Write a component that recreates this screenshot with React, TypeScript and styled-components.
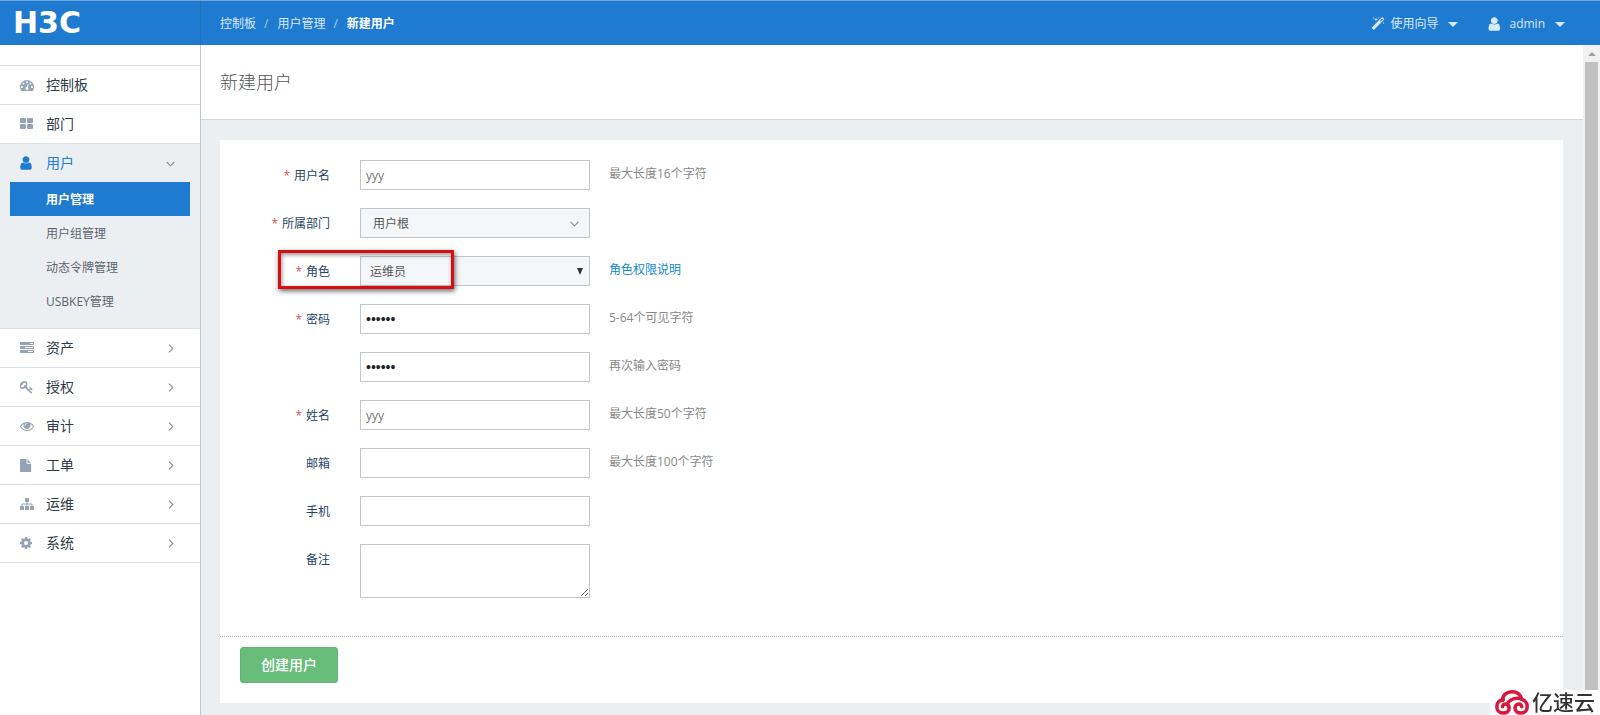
import React from "react";
import styled, { createGlobalStyle } from "styled-components";

const blue = "#1f7bd0";
const line = "#dde1e5";

const GlobalStyle = createGlobalStyle`
  * { box-sizing: border-box; }
  body {
    margin: 0;
    background: #fff;
    color: #333;
    font-family: "Open Sans", "Noto Sans CJK SC", sans-serif;
    font-size: 12px;
    line-height: 18px;
  }
  input, select, textarea, button { font: inherit; margin: 0; }
  a { color: inherit; text-decoration: none; }
  ul, ol { list-style: none; margin: 0; padding: 0; }
`;

const Shell = styled.div`
  display: flex;
  flex-direction: column;
  height: 100vh;
  overflow: hidden;
`;

const TopBar = styled.header`
  display: flex;
  align-items: center;
  flex: none;
  height: 45px;
  border-top: 1px solid #6fa8dc;
  background: ${blue};
  color: #d8e9fa;
  line-height: 20px;
`;

const Brand = styled.a`
  display: flex;
  align-items: center;
  align-self: stretch;
  width: 201px;
  padding-left: 13px;
  border-right: 1px solid #2470b8;
  color: #fff;
  font: bold 30px/44px "DejaVu Sans", sans-serif;
`;

const Crumbs = styled.ol`
  display: flex;
  flex: 1;
  padding: 2px 0 0 19px;
  li + li::before {
    content: "/";
    padding: 0 9px 0 8px;
    color: #a5cbef;
  }
`;

const CrumbLink = styled.a<{ $current?: boolean }>`
  color: ${(p) => (p.$current ? "#fff" : "#d8e9fa")};
  font-weight: ${(p) => (p.$current ? 700 : 400)};
`;

const TopActions = styled.div`
  display: flex;
  gap: 30px;
  padding: 2px 35px 0 0;
`;

const TopButton = styled.button`
  display: flex;
  align-items: center;
  gap: 5px;
  padding: 0;
  border: 0;
  background: none;
  color: #d8e9fa;
  cursor: pointer;
`;

const Caret = styled.span`
  margin-left: 5px;
  border: 5px solid transparent;
  border-top-color: #d8e9fa;
  border-bottom: 0;
`;

const Body = styled.div`
  display: flex;
  flex: 1;
  min-height: 0;
`;

const Sidebar = styled.nav`
  flex: none;
  width: 201px;
  padding-top: 20px;
  border-right: 1px solid #c3c7cb;
  background: #fff;
`;

const Menu = styled.ul`
  border-bottom: 1px solid ${line};
`;

const MenuGroup = styled.li<{ $open?: boolean }>`
  border-top: 1px solid ${line};
  padding-bottom: ${(p) => (p.$open ? 10 : 0)}px;
  background: ${(p) => (p.$open ? "#eceff2" : "#fff")};
`;

const MenuLink = styled.a<{ $open?: boolean }>`
  display: flex;
  align-items: center;
  height: 38px;
  padding: 0 25px 0 20px;
  color: ${(p) => (p.$open ? blue : "#2f3b48")};
  font-size: 14px;
  svg:first-child { color: ${(p) => (p.$open ? blue : "#93a3b3")}; }
`;

const MenuIcon = styled.span`
  display: flex;
  width: 26px;
`;

const MenuText = styled.span`
  flex: 1;
`;

const SubLink = styled.a<{ $active?: boolean }>`
  display: block;
  height: 34px;
  margin: 0 10px;
  padding-left: 36px;
  background: ${(p) => (p.$active ? blue : "transparent")};
  color: ${(p) => (p.$active ? "#fff" : "#5b6470")};
  font-weight: ${(p) => (p.$active ? 700 : 400)};
  line-height: 36px;
`;

const Content = styled.main`
  flex: 1;
  min-width: 0;
  background: #eceff2;
`;

const PageHead = styled.div`
  padding: 24px 19px;
  border-bottom: 1px solid #d5d9dd;
  background: #fff;
`;

const PageTitle = styled.h1`
  margin: 0;
  color: #555;
  font-size: 18px;
  font-weight: 300;
  line-height: 26px;
`;

const Card = styled.form`
  margin: 20px 20px 12px 19px;
  background: #fff;
`;

const Fields = styled.div`
  display: flex;
  flex-direction: column;
  gap: 18px;
  padding: 20px 0 38px;
`;

const Row = styled.div`
  position: relative;
  display: flex;
  align-items: flex-start;
`;

const Label = styled.label`
  width: 110px;
  height: 30px;
  margin-right: 30px;
  color: #1f4466;
  line-height: 32px;
  text-align: right;
`;

const Required = styled.span`
  margin-right: 4px;
  color: #d9534f;
`;

const Control = styled.div`
  position: relative;
  display: flex;
  width: 230px;
`;

const TextBox = styled.input`
  width: 100%;
  height: 30px;
  padding: 0 5px;
  border: 1px solid #c2c5cb;
  border-radius: 0;
  background: #fff;
  color: #777;
  outline: none;
  &[type="password"] {
    color: #222;
    font-family: "Liberation Sans", sans-serif;
    font-size: 14px;
  }
`;

const TextArea = styled.textarea`
  width: 100%;
  height: 54px;
  padding: 5px;
  border: 1px solid #c2c5cb;
  border-radius: 0;
  outline: none;
  resize: both;
`;

const Select = styled.select<{ $inset: number }>`
  appearance: none;
  width: 100%;
  height: 30px;
  padding: 2px 24px 0 ${(p) => p.$inset}px;
  border: 1px solid #c2c5d0;
  border-radius: 0;
  background: #f4f6fa;
  color: #555;
`;

const SelectMark = styled.span<{ $right: number }>`
  position: absolute;
  top: 0;
  right: ${(p) => p.$right}px;
  display: flex;
  align-items: center;
  height: 30px;
  color: #777;
  pointer-events: none;
`;

const Hint = styled.span`
  padding-left: 19px;
  color: #888;
  line-height: 28px;
`;

const HintLink = styled.a`
  padding-left: 19px;
  color: #1088cc;
  line-height: 28px;
`;

const Callout = styled.div`
  position: absolute;
  top: -6px;
  left: 58px;
  width: 176px;
  height: 39px;
  border: 3px solid #d60f12;
  box-shadow: 1px 2px 5px rgba(0, 0, 0, 0.6), inset 1px 2px 4px rgba(0, 0, 0, 0.4);
  pointer-events: none;
`;

const Footer = styled.div`
  padding: 10px 20px 20px;
  border-top: 1px dotted #b5b9bd;
`;

const Submit = styled.button`
  display: block;
  height: 36px;
  padding: 0 20px;
  border: 1px solid #5fb573;
  border-radius: 3px;
  background: #67bd79;
  color: #fff;
  font-size: 14px;
  font-weight: 500;
  cursor: pointer;
`;

const ScrollTrack = styled.div`
  display: flex;
  flex-direction: column;
  flex: none;
  width: 17px;
  padding: 0 2px;
  background: #f1f1f1;
`;

const ScrollUp = styled.span`
  margin: 7px 3px 6px;
  border: 4px solid transparent;
  border-top: 0;
  border-bottom-color: #a0a0a0;
`;

const ScrollThumb = styled.span`
  flex: 1;
  background: #c1c1c1;
`;

const Watermark = styled.div`
  position: fixed;
  right: 0;
  bottom: 0;
  display: flex;
  align-items: center;
  gap: 3px;
  height: 25px;
  padding: 0 5px;
  background: #fff;
  color: #333;
  font-size: 21px;
  font-weight: 500;
  line-height: 25px;
`;

type IconProps = { d: string; left?: number; size?: number };

const Icon = ({ d, left = 0, size = 14 }: IconProps) => (
  <svg width={size} height={size} viewBox={`${left} 0 1792 1792`} fill="currentColor" aria-hidden="true">
    <path d={d} />
  </svg>
);

const Chevron = ({ down }: { down?: boolean }) => (
  <svg width="9" height="9" viewBox="0 0 9 9" fill="none" stroke="#8a9097" strokeWidth="1.1" aria-hidden="true">
    <path d={down ? "M.7 3 4.5 6.8 8.3 3" : "M3 .7 6.8 4.5 3 8.3"} />
  </svg>
);

const icons = {
  dashboard: "M384 1152q0-53-37.5-90.5t-90.5-37.5-90.5 37.5-37.5 90.5 37.5 90.5 90.5 37.5 90.5-37.5 37.5-90.5zm192-448q0-53-37.5-90.5t-90.5-37.5-90.5 37.5-37.5 90.5 37.5 90.5 90.5 37.5 90.5-37.5 37.5-90.5zm428 481l101-382q6-26-7.5-48.5t-38.5-29.5-48 6.5-30 39.5l-101 382q-60 5-107 43.5t-63 98.5q-20 77 20 146t117 89 146-20 89-117q16-60-6-117t-72-91zm660-33q0-53-37.5-90.5t-90.5-37.5-90.5 37.5-37.5 90.5 37.5 90.5 90.5 37.5 90.5-37.5 37.5-90.5zm-640-640q0-53-37.5-90.5t-90.5-37.5-90.5 37.5-37.5 90.5 37.5 90.5 90.5 37.5 90.5-37.5 37.5-90.5zm448 192q0-53-37.5-90.5t-90.5-37.5-90.5 37.5-37.5 90.5 37.5 90.5 90.5 37.5 90.5-37.5 37.5-90.5zm320 448q0 261-141 483-19 29-54 29h-1402q-35 0-54-29-141-221-141-483 0-182 71-348t191-286 286-191 348-71 348 71 286 191 191 286 71 348z",
  grid: "M832 1024v384q0 52-38 90t-90 38h-512q-52 0-90-38t-38-90v-384q0-52 38-90t90-38h512q52 0 90 38t38 90zm0-768v384q0 52-38 90t-90 38h-512q-52 0-90-38t-38-90v-384q0-52 38-90t90-38h512q52 0 90 38t38 90zm896 768v384q0 52-38 90t-90 38h-512q-52 0-90-38t-38-90v-384q0-52 38-90t90-38h512q52 0 90 38t38 90zm0-768v384q0 52-38 90t-90 38h-512q-52 0-90-38t-38-90v-384q0-52 38-90t90-38h512q52 0 90 38t38 90z",
  user: "M1536 1399q0 109-62.5 187t-150.5 78h-854q-88 0-150.5-78t-62.5-187q0-85 8.5-160.5t31.5-152 58.5-131 94-89 134.5-34.5q131 128 313 128t313-128q76 0 134.5 34.5t94 89 58.5 131 31.5 152 8.5 160.5zm-256-887q0 159-112.5 271.5t-271.5 112.5-271.5-112.5-112.5-271.5 112.5-271.5 271.5-112.5 271.5 112.5 112.5 271.5z",
  tasks: "M1024 1408h640v-128h-640v128zm-384-512h1024v-128h-1024v128zm640-512h384v-128h-384v128zm512 832v256q0 26-19 45t-45 19h-1664q-26 0-45-19t-19-45v-256q0-26 19-45t45-19h1664q26 0 45 19t19 45zm0-512v256q0 26-19 45t-45 19h-1664q-26 0-45-19t-19-45v-256q0-26 19-45t45-19h1664q26 0 45 19t19 45zm0-512v256q0 26-19 45t-45 19h-1664q-26 0-45-19t-19-45v-256q0-26 19-45t45-19h1664q26 0 45 19t19 45z",
  key: "M832 512q0-80-56-136t-136-56-136 56-56 136q0 42 19 83-41-19-83-19-80 0-136 56t-56 136 56 136 136 56 136-56 56-136q0-42-19-83 41 19 83 19 80 0 136-56t56-136zm851 704q0 17-49 66t-66 49q-9 0-28.5-16t-36.5-33-38.5-40-24.5-26l-96 96 220 220q28 28 28 68 0 42-39 81t-81 39q-40 0-68-28l-671-671q-176 131-365 131-163 0-265.5-102.5t-102.5-265.5q0-160 95-313t248-248 313-95q163 0 265.5 102.5t102.5 265.5q0 189-131 365l355 355 96-96q-3-3-26-24.5t-40-38.5-33-36.5-16-28.5q0-17 49-66t66-49q13 0 23 10 6 6 46 44.5t82 79.5 86.5 86 73 78 28.5 41z",
  eye: "M1664 960q-152-236-381-353 61 104 61 225 0 185-131.5 316.5t-316.5 131.5-316.5-131.5-131.5-316.5q0-121 61-225-229 117-381 353 133 205 333.5 326.5t434.5 121.5 434.5-121.5 333.5-326.5zm-720-384q0-20-14-34t-34-14q-125 0-214.5 89.5t-89.5 214.5q0 20 14 34t34 14 34-14 14-34q0-86 61-147t147-61q20 0 34-14t14-34zm848 384q0 34-20 69-140 230-376.5 368.5t-499.5 138.5-499.5-139-376.5-368q-20-35-20-69t20-69q140-229 376.5-368t499.5-139 499.5 139 376.5 368q20 35 20 69z",
  file: "M1152 512v-472q22 14 36 28l408 408q14 14 28 36h-472zm-128 32q0 40 28 68t68 28h544v1056q0 40-28 68t-68 28h-1344q-40 0-68-28t-28-68v-1600q0-40 28-68t68-28h800v544z",
  sitemap: "M1792 1248v320q0 40-28 68t-68 28h-320q-40 0-68-28t-28-68v-320q0-40 28-68t68-28h96v-192h-512v192h96q40 0 68 28t28 68v320q0 40-28 68t-68 28h-320q-40 0-68-28t-28-68v-320q0-40 28-68t68-28h96v-192h-512v192h96q40 0 68 28t28 68v320q0 40-28 68t-68 28h-320q-40 0-68-28t-28-68v-320q0-40 28-68t68-28h96v-192q0-52 38-90t90-38h512v-192h-96q-40 0-68-28t-28-68v-320q0-40 28-68t68-28h320q40 0 68 28t28 68v320q0 40-28 68t-68 28h-96v192h512q52 0 90 38t38 90v192h96q40 0 68 28t28 68z",
  cog: "M1152 896q0-106-75-181t-181-75-181 75-75 181 75 181 181 75 181-75 75-181zm512-109v222q0 12-8 23t-20 13l-185 28q-19 54-39 91 35 50 107 138 10 12 10 25t-9 23q-27 37-99 108t-94 71q-12 0-26-9l-138-108q-44 23-91 38-16 136-29 186-7 28-36 28h-222q-14 0-24.5-8.5t-11.5-21.5l-28-184q-49-16-90-37l-141 107q-10 9-25 9-14 0-25-11-126-114-165-168-7-10-7-23 0-12 8-23 15-21 51-66.5t54-70.5q-27-50-41-99l-183-27q-13-2-21-12.5t-8-23.5v-222q0-12 8-23t19-13l186-28q14-46 39-92-40-57-107-138-10-12-10-24 0-10 9-23 26-36 98.5-107.5t94.5-71.5q13 0 26 10l138 107q44-23 91-38 16-136 29-186 7-28 36-28h222q14 0 24.5 8.5t11.5 21.5l28 184q49 16 90 37l142-107q9-9 24-9 13 0 25 10 129 119 165 170 7 8 7 22 0 12-8 23-15 21-51 66.5t-54 70.5q26 50 41 98l183 28q13 2 21 12.5t8 23.5z",
  magic: "M1254 581l293-293-107-107-293 293zm447-293q0 27-18 45l-1286 1286q-18 18-45 18t-45-18l-198-198q-18-18-18-45t18-45l1286-1286q18-18 45-18t45 18l198 198q18 18 18 45zm-1351-190l98 30-98 30-30 98-30-98-98-30 98-30 30-98zm350 162l196 60-196 60-60 196-60-196-196-60 196-60 60-196zm930 478l98 30-98 30-30 98-30-98-98-30 98-30 30-98zm-640-640l98 30-98 30-30 98-30-98-98-30 98-30 30-98z",
};

type MenuEntry = { text: string; icon: string; left?: number; size?: number; leaf?: boolean; children?: string[] };

const menu: MenuEntry[] = [
  { text: "控制板", icon: icons.dashboard, leaf: true },
  { text: "部门", icon: icons.grid, left: 64, leaf: true },
  { text: "用户", icon: icons.user, left: 224, size: 16, children: ["用户管理", "用户组管理", "动态令牌管理", "USBKEY管理"] },
  { text: "资产", icon: icons.tasks },
  { text: "授权", icon: icons.key, left: 64 },
  { text: "审计", icon: icons.eye },
  { text: "工单", icon: icons.file, left: 128, size: 13 },
  { text: "运维", icon: icons.sitemap },
  { text: "系统", icon: icons.cog, left: 128 },
];

type FieldProps = {
  id: string;
  label?: string;
  required?: boolean;
  hint?: React.ReactNode;
  children: React.ReactNode;
};

const Field = ({ id, label, required, hint, children }: FieldProps) => (
  <Row>
    <Label htmlFor={id}>
      {required && <Required>*</Required>}
      {label}
    </Label>
    <Control>{children}</Control>
    {hint}
  </Row>
);

export default function App() {
  return (
    <Shell>
      <GlobalStyle />
      <TopBar>
        <Brand href="#">H3C</Brand>
        <Crumbs>
          <li><CrumbLink href="#">控制板</CrumbLink></li>
          <li><CrumbLink href="#">用户管理</CrumbLink></li>
          <li><CrumbLink href="#" $current>新建用户</CrumbLink></li>
        </Crumbs>
        <TopActions>
          <TopButton type="button">
            <Icon d={icons.magic} />
            使用向导
            <Caret />
          </TopButton>
          <TopButton type="button">
            <Icon d={icons.user} left={192} size={16} />
            admin
            <Caret />
          </TopButton>
        </TopActions>
      </TopBar>
      <Body>
        <Sidebar>
          <Menu>
            {menu.map(({ text, icon, left, size, leaf, children }) => (
              <MenuGroup key={text} $open={!!children}>
                <MenuLink href="#" $open={!!children}>
                  <MenuIcon><Icon d={icon} left={left} size={size} /></MenuIcon>
                  <MenuText>{text}</MenuText>
                  {!leaf && <Chevron down={!!children} />}
                </MenuLink>
                {children && (
                  <ul>
                    {children.map((child, i) => (
                      <li key={child}><SubLink href="#" $active={i === 0}>{child}</SubLink></li>
                    ))}
                  </ul>
                )}
              </MenuGroup>
            ))}
          </Menu>
        </Sidebar>
        <Content>
          <PageHead><PageTitle>新建用户</PageTitle></PageHead>
          <Card onSubmit={(e) => e.preventDefault()}>
            <Fields>
              <Field id="login" label="用户名" required hint={<Hint>最大长度16个字符</Hint>}>
                <TextBox id="login" type="text" defaultValue="yyy" />
              </Field>
              <Field id="department" label="所属部门" required>
                <Select id="department" $inset={12}><option>用户根</option></Select>
                <SelectMark $right={11}><Chevron down /></SelectMark>
              </Field>
              <Row>
                <Label htmlFor="role"><Required>*</Required>角色</Label>
                <Control>
                  <Select id="role" $inset={9}><option>运维员</option></Select>
                  <SelectMark $right={7}>
                    <svg width="6" height="7" viewBox="0 0 6 7" fill="#333" aria-hidden="true"><path d="M0 0h6L3 7z" /></svg>
                  </SelectMark>
                </Control>
                <HintLink href="#">角色权限说明</HintLink>
                <Callout />
              </Row>
              <Field id="password" label="密码" required hint={<Hint>5-64个可见字符</Hint>}>
                <TextBox id="password" type="password" defaultValue="abcdef" />
              </Field>
              <Field id="password-repeat" hint={<Hint>再次输入密码</Hint>}>
                <TextBox id="password-repeat" type="password" defaultValue="abcdef" aria-label="再次输入密码" />
              </Field>
              <Field id="fullname" label="姓名" required hint={<Hint>最大长度50个字符</Hint>}>
                <TextBox id="fullname" type="text" defaultValue="yyy" />
              </Field>
              <Field id="email" label="邮箱" hint={<Hint>最大长度100个字符</Hint>}>
                <TextBox id="email" type="text" />
              </Field>
              <Field id="phone" label="手机">
                <TextBox id="phone" type="text" />
              </Field>
              <Field id="remark" label="备注">
                <TextArea id="remark" />
              </Field>
            </Fields>
            <Footer><Submit type="submit">创建用户</Submit></Footer>
          </Card>
        </Content>
        <ScrollTrack aria-hidden="true">
          <ScrollUp />
          <ScrollThumb />
        </ScrollTrack>
      </Body>
      <Watermark>
        <svg width="34" height="25" viewBox="0 0 34 25" fill="none" stroke="#d9173a" strokeWidth="3.500" strokeLinecap="round" aria-hidden="true">
          <path d="M7.500 10.500C7.500 5 11.500 1.800 17 1.800c5 0 8.500 2.800 9.500 7.200" />
          <path d="M13.500 16.500c-1.800-2-1-4.500 2.500-6.500 3-1.700 8-2 11.500-.5 3 1.300 4.700 3.800 4.700 7 0 4-2.500 6.600-6.200 6.600-3.500 0-6-2.200-6-5 0-2.400 1.700-4 3.700-4 1.800 0 3 1.200 3 2.600" />
          <path d="M8.500 9.700C4.500 10 1.800 12.800 1.800 16.500c0 4 2.700 6.600 6.400 6.600 3.600 0 6-2.200 6-5 0-2.400-1.700-4-3.700-4-1.800 0-3 1.200-3 2.600" />
        </svg>
        <span>亿速云</span>
      </Watermark>
    </Shell>
  );
}
